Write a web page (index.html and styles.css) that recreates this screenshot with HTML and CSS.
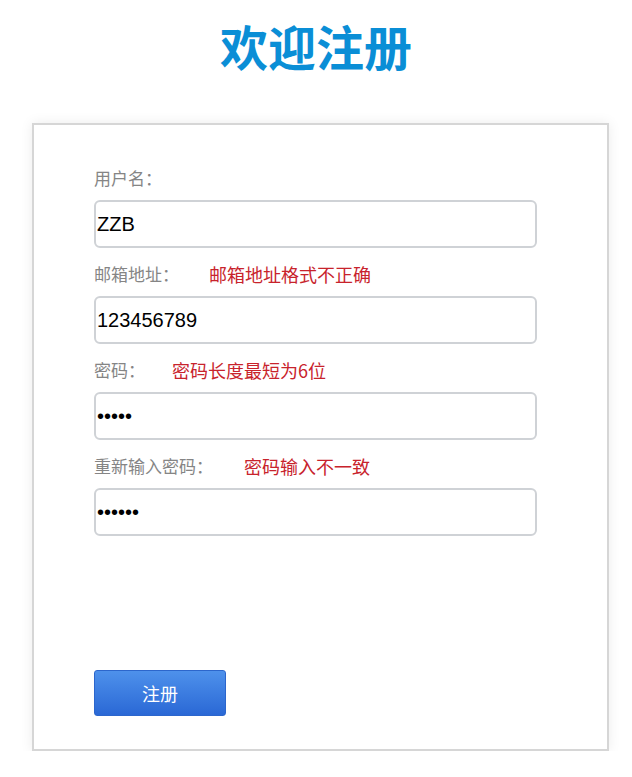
FILE: index.html
```html
<!DOCTYPE html>
<html lang="zh">
<head>
<meta charset="utf-8">
<title>欢迎注册</title>
<link rel="stylesheet" href="styles.css">
</head>
<body>
<h1 class="title">欢迎注册</h1>
<form class="card">
  <div class="field">
    <div class="label-row"><span class="label">用户名：</span></div>
    <input class="input" type="text" value="ZZB">
  </div>
  <div class="field">
    <div class="label-row"><span class="label">邮箱地址：</span><span class="error err-email">邮箱地址格式不正确</span></div>
    <input class="input" type="text" value="123456789">
  </div>
  <div class="field">
    <div class="label-row"><span class="label">密码：</span><span class="error err-pwd">密码长度最短为6位</span></div>
    <input class="input" type="password" value="12345">
  </div>
  <div class="field">
    <div class="label-row"><span class="label">重新输入密码：</span><span class="error err-repeat">密码输入不一致</span></div>
    <input class="input" type="password" value="123456">
  </div>
  <button class="submit" type="button">注册</button>
</form>
</body>
</html>
```
FILE: styles.css
```css
html, body {
  margin: 0;
  padding: 0;
  background: #fff;
}
body {
  font-family: "Noto Sans CJK SC", "Liberation Sans", sans-serif;
}
.title {
  margin: 17px 0 0;
  height: 56px;
  line-height: 56px;
  font-size: 48px;
  font-weight: 700;
  color: #0a8ed6;
  text-align: center;
}
.card {
  box-sizing: border-box;
  width: 577px;
  margin: 50px 0 0 32px;
  padding: 41px 0 33px 60px;
  border: 2px solid #d6d6d6;
  background: #fff;
  box-shadow: 0 0 12px rgba(0, 0, 0, 0.08);
  display: flex;
  flex-direction: column;
  align-items: flex-start;
}
.field {
  display: flex;
  flex-direction: column;
  margin-bottom: 14px;
}
.label-row {
  height: 24px;
  margin-bottom: 10px;
  display: flex;
  align-items: center;
}
.label {
  font-size: 17px;
  color: #858585;
  line-height: 24px;
}
.error {
  font-size: 18px;
  color: #c8232c;
  line-height: 24px;
}
.err-email { margin-left: 30px; }
.err-pwd { margin-left: 27px; }
.err-repeat { margin-left: 31px; }
.input {
  box-sizing: border-box;
  width: 443px;
  height: 48px;
  margin: 0;
  padding: 0 0 0 1px;
  border: 2px solid #cfd2d6;
  border-radius: 6px;
  font-family: "Liberation Sans", Arial, sans-serif;
  font-size: 20px;
  color: #000;
  background: #fff;
  outline: none;
}
.field:last-of-type .input {
  margin-bottom: 1px;
}
.submit {
  box-sizing: border-box;
  margin-top: 119px;
  width: 132px;
  height: 46px;
  border: 1px solid #2c66cc;
  border-radius: 3px;
  background: linear-gradient(#4e91eb, #2a68d5);
  color: #fff;
  font-family: "Noto Sans CJK SC", sans-serif;
  font-size: 18px;
  padding: 0;
}
```
